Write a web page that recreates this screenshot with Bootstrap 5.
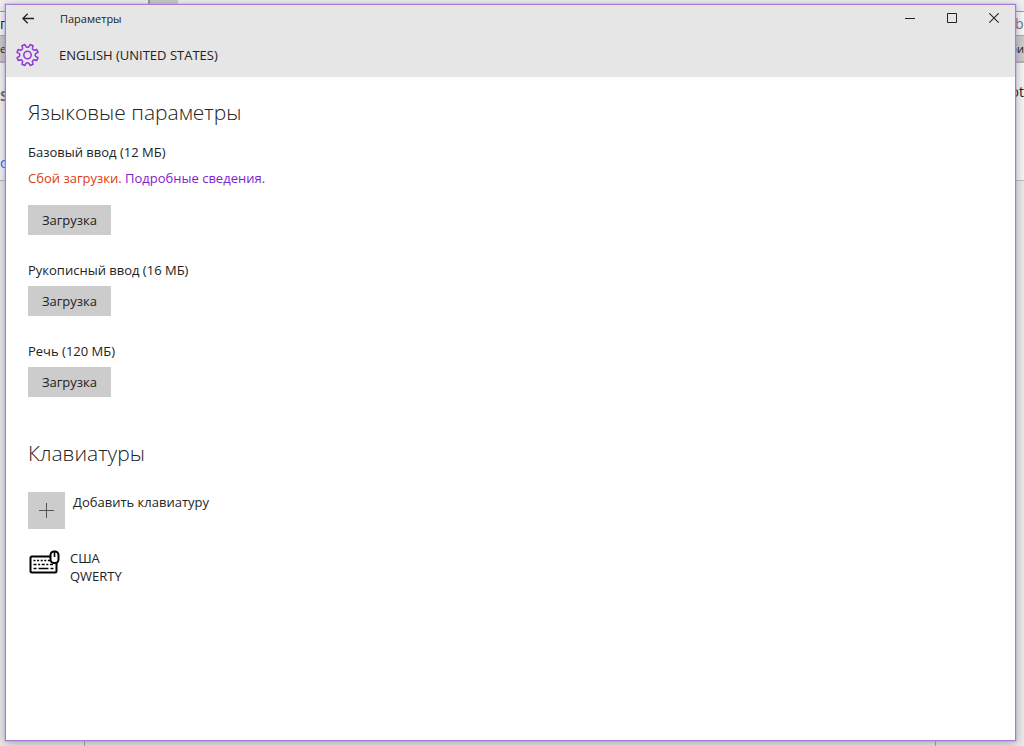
<!DOCTYPE html>
<html lang="ru">
<head>
<meta charset="utf-8">
<meta name="viewport" content="width=device-width, initial-scale=1">
<title>Параметры</title>
<link href="https://cdn.jsdelivr.net/npm/bootstrap@5.3.0/dist/css/bootstrap.min.css" rel="stylesheet">
<style>
  body { font-family: "Open Sans", "Noto Sans", sans-serif; font-size: 13px; line-height: 18px; color: #222; background: #e8e8e8; }
  .btn { font-size: 13px; line-height: 20px; }
  .backdrop { z-index: 0; background: #e9e9e9; font-size: 14px; }
  .bg-tabs { height: 12px; background: #eee; border-bottom: 1px solid #999; }
  .bg-tab { width: 30px; height: 4px; margin-left: 148px; background: #c8c8c8; border-left: 2px solid #999; }
  .bg-address { height: 24px; background: #f6f6f6; border-bottom: 1px solid #aaa; }
  .bg-marks { height: 27px; background: #ccc; border-bottom: 2px solid #b4b4b4; font-size: 11px; }
  .bg-page { height: 118px; background: #f4f4f4; border-bottom: 1px solid #bbb; }
  .bg-left { width: 5px; }
  .bg-right { width: 9px; }
  .bg-column { margin: 0 88px 0 84px; border: solid #aaa; border-width: 0 1px; }
  .app-frame { z-index: 1; padding: 4px 8px 5px 5px; }
  .app-window { background: #fff; border: 1px solid #a87bd8; box-shadow: 0 0 0 1px rgba(190,150,240,.35), 0 2px 9px rgba(0,0,0,.3); }
  .app-head { background: #e6e6e6; height: 72px; }
  .title-row { height: 27px; font-size: 11px; padding-left: 14px; }
  .title-row button { height: 27px; color: #222; }
  .back-btn { width: 16px; }
  .caption-btn { width: 42px; }
  .title-text { margin-left: 24px; }
  .crumb-row { height: 46px; padding-left: 10px; gap: 20px; }
  .content { padding: 20px 22px; }
  h2 { font-size: 21px; line-height: 30px; font-weight: 300; margin: 0; }
  .err { color: #e03a10; }
  .more { color: #8022cc; }
  .load-btn { width: 83px; height: 30px; margin-top: 6px; background: #ccc; color: #222; }
  .pack { margin-top: 15px; }
  .pack-title { line-height: 20px; }
  .pack-status { line-height: 32px; padding-bottom: 11px; }
  .pack + .pack { margin-top: 25px; }
  .keyboards { margin-top: 41px; }
  .plus-box { width: 37px; height: 37px; background: #ccc; }
  .add-row { margin-top: 24px; }
  svg { display: block; flex: none; }
</style>
<script src="https://cdn.jsdelivr.net/npm/bootstrap@5.3.0/dist/js/bootstrap.bundle.min.js"></script>
</head>
<body class="position-relative min-vh-100 overflow-hidden">
<div class="backdrop position-absolute top-0 start-0 w-100 h-100 d-flex flex-column" aria-hidden="true">
  <div class="bg-tabs"><div class="bg-tab"></div></div>
  <div class="bg-address d-flex justify-content-between align-items-center">
    <div class="bg-left">го</div>
    <div class="bg-right text-secondary">b</div>
  </div>
  <div class="bg-marks d-flex justify-content-between align-items-center">
    <div class="bg-left">е</div>
    <div class="bg-right d-flex justify-content-end">би</div>
  </div>
  <div class="bg-page d-flex justify-content-between">
    <div class="bg-left d-flex flex-column justify-content-between pt-4 pb-2"><span class="fw-bold text-secondary">S</span><span class="text-primary">ст</span></div>
    <div class="bg-right d-flex justify-content-end pt-3 mt-1">ot</div>
  </div>
  <div class="bg-column flex-grow-1"></div>
</div>

<div class="app-frame position-relative min-vh-100 d-flex">
  <div class="app-window flex-grow-1">
    <header class="app-head">
      <div class="title-row d-flex align-items-center">
        <button class="back-btn btn p-0 border-0 rounded-0 d-flex align-items-center justify-content-center" type="button" aria-label="Назад">
          <svg width="12" height="11" viewBox="0 0 12 11" fill="none" stroke="currentColor" stroke-width="1.3"><path d="M12 5.5H1M5.7.7.9 5.5l4.8 4.8"/></svg>
        </button>
        <span class="title-text">Параметры</span>
        <div class="d-flex ms-auto">
          <button class="caption-btn btn p-0 border-0 rounded-0 d-flex align-items-center justify-content-center" type="button" aria-label="Свернуть">
            <svg width="10" height="11" viewBox="0 0 10 11" stroke="currentColor"><path d="M0 5.5h10"/></svg>
          </button>
          <button class="caption-btn btn p-0 border-0 rounded-0 d-flex align-items-center justify-content-center" type="button" aria-label="Развернуть">
            <svg width="10" height="11" viewBox="0 0 10 11" fill="none" stroke="currentColor"><path d="M.5.5h9v9h-9z"/></svg>
          </button>
          <button class="caption-btn btn p-0 border-0 rounded-0 d-flex align-items-center justify-content-center" type="button" aria-label="Закрыть">
            <svg width="10" height="11" viewBox="0 0 10 11" stroke="currentColor" stroke-width="1.1"><path d="M.3.3l9.4 9.4M9.7.3.3 9.7"/></svg>
          </button>
        </div>
      </div>
      <div class="crumb-row d-flex align-items-center">
        <svg width="23" height="24" viewBox="-11.500 -12 23 24" fill="none" stroke="#9038d8" stroke-width="1.5" stroke-linejoin="round">
          <path d="M1.28-8.1 2.61-10.48 5.56-9.26 4.82-6.63Q5.2-5.2 6.63-4.82L9.26-5.56 10.48-2.61 8.1-1.28Q7.2 0 8.1 1.28L10.48 2.61 9.26 5.56 6.63 4.82Q5.2 5.2 4.82 6.63L5.56 9.26 2.61 10.48 1.28 8.1Q0 7.2-1.28 8.1L-2.61 10.48-5.56 9.26-4.82 6.63Q-5.2 5.2-6.63 4.82L-9.26 5.56-10.48 2.61-8.1 1.28Q-7.2 0-8.1-1.28L-10.48-2.61-9.26-5.56-6.63-4.82Q-5.2-5.2-4.82-6.63L-5.56-9.26-2.61-10.48-1.28-8.1Q0-7.2 1.28-8.1Z"/>
          <circle r="3.7"/>
        </svg>
        <span>ENGLISH (UNITED STATES)</span>
      </div>
    </header>

    <main class="content">
      <h2>Языковые параметры</h2>
      <section class="pack">
        <div class="pack-title">Базовый ввод (12 МБ)</div>
        <div class="pack-status"><span class="err">Сбой загрузки.</span> <a class="more text-decoration-none" href="#">Подробные сведения.</a></div>
        <button class="load-btn btn p-0 border-0 rounded-0 mt-0" type="button">Загрузка</button>
      </section>
      <section class="pack">
        <div class="pack-title">Рукописный ввод (16 МБ)</div>
        <button class="load-btn btn p-0 border-0 rounded-0" type="button">Загрузка</button>
      </section>
      <section class="pack">
        <div class="pack-title">Речь (120 МБ)</div>
        <button class="load-btn btn p-0 border-0 rounded-0" type="button">Загрузка</button>
      </section>

      <h2 class="keyboards">Клавиатуры</h2>
      <button class="add-row btn p-0 border-0 rounded-0 d-flex gap-2 text-start" type="button">
        <span class="plus-box d-flex align-items-center justify-content-center">
          <svg width="15" height="15" viewBox="0 0 15 15" stroke="#555"><path d="M0 7.5h15M7.5 0v15"/></svg>
        </span>
        <span>Добавить клавиатуру</span>
      </button>
      <div class="d-flex mt-3 pt-1 gap-2">
        <svg width="34" height="28" viewBox="0 0 34 28" fill="none" stroke="#000">
          <rect x="2.500" y="7.500" width="26" height="16" rx="1.500" stroke-width="2"/>
          <path d="M5.500 11.500h17" stroke-width="1.600" stroke-dasharray="2 1.600"/>
          <path d="M5.500 15.500h20" stroke-width="1.600" stroke-dasharray="3 1.600 2 1.600"/>
          <path d="M5.500 19.500h3M10.500 19.500h10M22.500 19.500h3" stroke-width="1.600"/>
          <rect x="22.500" y="2.500" width="8" height="11.500" rx="3.500" fill="#fff" stroke-width="2"/>
          <path d="M26.500 3v5" stroke-width="1.600"/>
        </svg>
        <div>США<br>QWERTY</div>
      </div>
    </main>
  </div>
</div>
</body>
</html>
